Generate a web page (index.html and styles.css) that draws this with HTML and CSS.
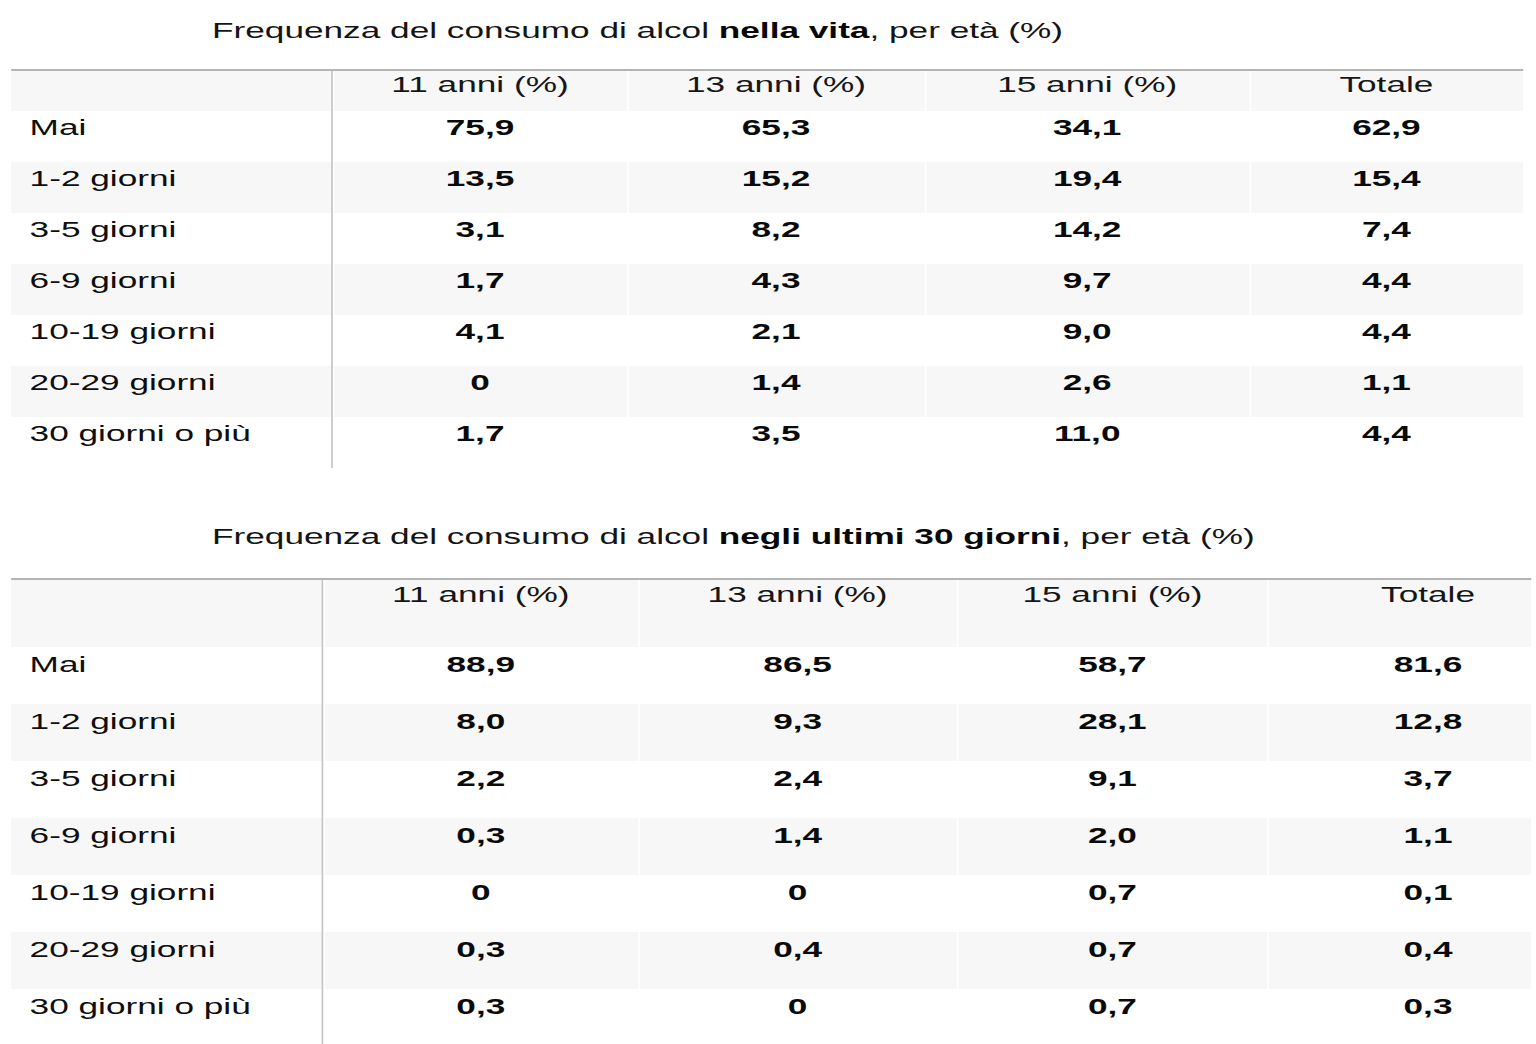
FILE: index.html
```html
<!DOCTYPE html>
<html lang="it">
<head>
<meta charset="utf-8">
<title>Frequenza del consumo di alcol</title>
<link rel="stylesheet" href="styles.css">
</head>
<body>
<div class="page">
  <h2 class="title title-first">Frequenza del consumo di alcol <b>nella vita</b>, per età (%)</h2>
  <div class="table t1">
    <div class="row head"><div class="cell label"></div><div class="cell">11 anni (%)</div><div class="cell">13 anni (%)</div><div class="cell">15 anni (%)</div><div class="cell">Totale</div></div>
    <div class="row"><div class="cell label">Mai</div><div class="cell val">75,9</div><div class="cell val">65,3</div><div class="cell val">34,1</div><div class="cell val">62,9</div></div>
    <div class="row alt"><div class="cell label">1-2 giorni</div><div class="cell val">13,5</div><div class="cell val">15,2</div><div class="cell val">19,4</div><div class="cell val">15,4</div></div>
    <div class="row"><div class="cell label">3-5 giorni</div><div class="cell val">3,1</div><div class="cell val">8,2</div><div class="cell val">14,2</div><div class="cell val">7,4</div></div>
    <div class="row alt"><div class="cell label">6-9 giorni</div><div class="cell val">1,7</div><div class="cell val">4,3</div><div class="cell val">9,7</div><div class="cell val">4,4</div></div>
    <div class="row"><div class="cell label">10-19 giorni</div><div class="cell val">4,1</div><div class="cell val">2,1</div><div class="cell val">9,0</div><div class="cell val">4,4</div></div>
    <div class="row alt"><div class="cell label">20-29 giorni</div><div class="cell val">0</div><div class="cell val">1,4</div><div class="cell val">2,6</div><div class="cell val">1,1</div></div>
    <div class="row"><div class="cell label">30 giorni o più</div><div class="cell val">1,7</div><div class="cell val">3,5</div><div class="cell val">11,0</div><div class="cell val">4,4</div></div>
  </div>

  <h2 class="title title-second">Frequenza del consumo di alcol <b>negli ultimi 30 giorni</b>, per età (%)</h2>
  <div class="table t2">
    <div class="row head"><div class="cell label"></div><div class="cell">11 anni (%)</div><div class="cell">13 anni (%)</div><div class="cell">15 anni (%)</div><div class="cell last">Totale</div></div>
    <div class="row"><div class="cell label">Mai</div><div class="cell val">88,9</div><div class="cell val">86,5</div><div class="cell val">58,7</div><div class="cell val last">81,6</div></div>
    <div class="row alt"><div class="cell label">1-2 giorni</div><div class="cell val">8,0</div><div class="cell val">9,3</div><div class="cell val">28,1</div><div class="cell val last">12,8</div></div>
    <div class="row"><div class="cell label">3-5 giorni</div><div class="cell val">2,2</div><div class="cell val">2,4</div><div class="cell val">9,1</div><div class="cell val last">3,7</div></div>
    <div class="row alt"><div class="cell label">6-9 giorni</div><div class="cell val">0,3</div><div class="cell val">1,4</div><div class="cell val">2,0</div><div class="cell val last">1,1</div></div>
    <div class="row"><div class="cell label">10-19 giorni</div><div class="cell val">0</div><div class="cell val">0</div><div class="cell val">0,7</div><div class="cell val last">0,1</div></div>
    <div class="row alt"><div class="cell label">20-29 giorni</div><div class="cell val">0,3</div><div class="cell val">0,4</div><div class="cell val">0,7</div><div class="cell val last">0,4</div></div>
    <div class="row"><div class="cell label">30 giorni o più</div><div class="cell val">0,3</div><div class="cell val">0</div><div class="cell val">0,7</div><div class="cell val last">0,3</div></div>
  </div>
</div>
</body>
</html>
```

FILE: styles.css
```css
html, body {
  margin: 0;
  padding: 0;
  background: #ffffff;
  overflow: hidden;
}

body {
  width: 1536px;
  height: 1044px;
  font-family: "Liberation Sans", Arial, sans-serif;
  color: #111111;
}

/* The reference is horizontally stretched; render at natural width and stretch */
.page {
  width: 960px;
  transform: scaleX(1.6);
  transform-origin: 0 0;
}

.title {
  font-size: 22px;
  line-height: 26px;
  font-weight: normal;
  color: #141414;
  margin: 0 0 0 132.5px;
}

.title b {
  font-weight: bold;
  color: #080808;
}

.title-first {
  padding-top: 18px;
}

.title-second {
  margin-top: 56px;
}

.table {
  margin-left: 6.5px;
  border-top: 2px solid #b4b4b4;
  font-size: 22px;
  line-height: 26px;
}

.t1 {
  margin-top: 25px;
  width: 945px;
}

.t2 {
  margin-top: 28px;
  width: 950.5px;
}

.row {
  display: grid;
  column-gap: 1px;
  background: #ffffff;
}

.t1 .row {
  grid-template-columns: 201px 183px 185px 202px 170px;
  height: 51px;
}

.t1 .row.head {
  height: 40px;
}

.t2 .row {
  grid-template-columns: 195px 196px 198px 193.5px 164px;
  height: 57px;
}

.t2 .row.head {
  height: 67px;
}

.cell {
  text-align: center;
  padding-top: 4px;
  white-space: nowrap;
}

.t2 .cell {
  padding-top: 5px;
}

.head .cell {
  background: #f7f7f7;
  color: #161616;
}

.t1 .head .cell {
  padding-top: 1px;
}

.t2 .head .cell {
  padding-top: 2px;
}

.alt .cell {
  background: #f7f7f7;
}

.cell.label {
  text-align: left;
  padding-left: 12px;
  border-right: 1px solid #c2c2c2;
  color: #0e0e0e;
}

.cell.val {
  font-weight: bold;
  color: #0a0a0a;
}

.t2 .cell.last {
  padding-left: 35px;
}
```
